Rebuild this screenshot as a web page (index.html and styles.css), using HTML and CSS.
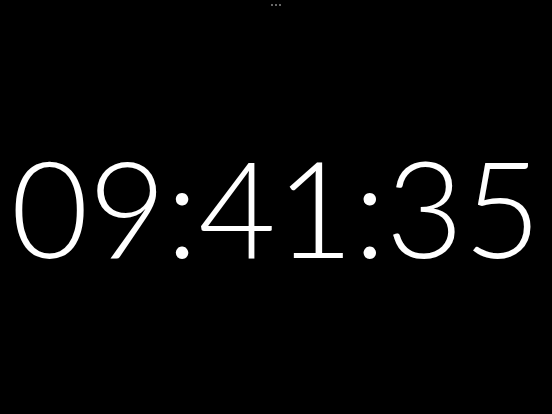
FILE: index.html
```html
<!DOCTYPE html>
<html>
<head>
<meta charset="utf-8">
<link rel="stylesheet" href="styles.css">
</head>
<body>
<div class="screen">
  <div class="handle"><span class="dot"></span><span class="dot"></span><span class="dot"></span></div>
  <div class="clock">09:41:35</div>
</div>
</body>
</html>
```
FILE: styles.css
```css
html, body {
  margin: 0;
  padding: 0;
  background: #000;
}
.screen {
  width: 552px;
  height: 414px;
  display: flex;
  flex-direction: column;
  align-items: center;
  justify-content: center;
  position: relative;
  overflow: hidden;
}
.handle {
  position: absolute;
  top: 4px;
  left: 271px;
  display: flex;
  gap: 2px;
}
.dot {
  width: 2px;
  height: 2px;
  border-radius: 1px;
  background: #8a8a8a;
}
.clock {
  font-family: Lato, sans-serif;
  font-weight: 300;
  font-size: 134px;
  line-height: 1;
  color: #fff;
  white-space: nowrap;
}
```
